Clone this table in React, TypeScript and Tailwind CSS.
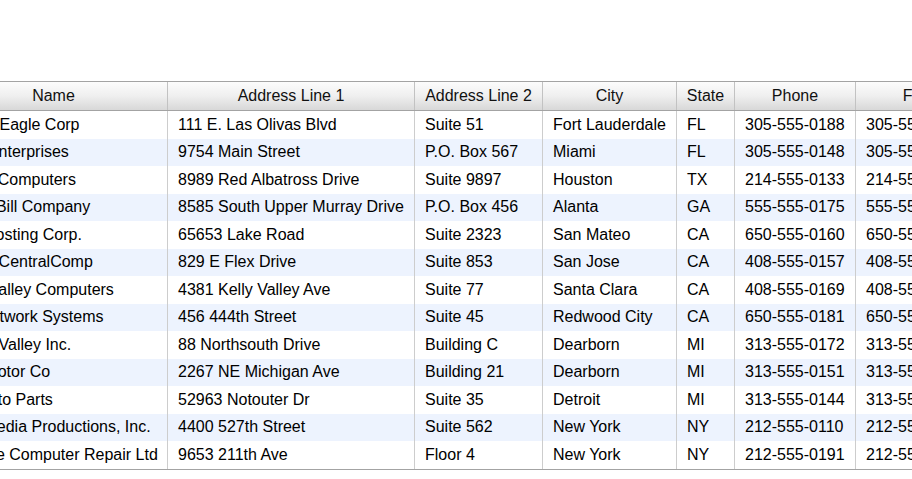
const columns = [
  { id: "name", label: "Name", width: "w-[228px]", pad: "pl-[7px]" },
  { id: "addr1", label: "Address Line 1", width: "w-[247px]", pad: "pl-[10px]" },
  { id: "addr2", label: "Address Line 2", width: "w-[128px]", pad: "pl-[10px]" },
  { id: "city", label: "City", width: "w-[134px]", pad: "pl-[10px]" },
  { id: "state", label: "State", width: "w-[58px]", pad: "pl-[10px]" },
  { id: "phone", label: "Phone", width: "w-[121px]", pad: "pl-[10px]" },
  { id: "fax", label: "Fax", width: "w-[121px]", pad: "pl-[10px]" },
] as const;

const rows = [
  ["Liberty Eagle Corp", "111 E. Las Olivas Blvd", "Suite 51", "Fort Lauderdale", "FL", "305-555-0188", "305-555-0189"],
  ["Apex Enterprises", "9754 Main Street", "P.O. Box 567", "Miami", "FL", "305-555-0148", "305-555-0149"],
  ["Global Computers", "8989 Red Albatross Drive", "Suite 9897", "Houston", "TX", "214-555-0133", "214-555-0134"],
  ["Pecos Bill Company", "8585 South Upper Murray Drive", "P.O. Box 456", "Alanta", "GA", "555-555-0175", "555-555-0176"],
  ["Web Hosting Corp.", "65653 Lake Road", "Suite 2323", "San Mateo", "CA", "650-555-0160", "650-555-0161"],
  ["Pacific CentralComp", "829 E Flex Drive", "Suite 853", "San Jose", "CA", "408-555-0157", "408-555-0158"],
  ["River Valley Computers", "4381 Kelly Valley Ave", "Suite 77", "Santa Clara", "CA", "408-555-0169", "408-555-0170"],
  ["Bay Network Systems", "456 444th Street", "Suite 45", "Redwood City", "CA", "650-555-0181", "650-555-0182"],
  ["Silicon Valley Inc.", "88 Northsouth Drive", "Building C", "Dearborn", "MI", "313-555-0172", "313-555-0173"],
  ["Ford Motor Co", "2267 NE Michigan Ave", "Building 21", "Dearborn", "MI", "313-555-0151", "313-555-0152"],
  ["Ace Auto Parts", "52963 Notouter Dr", "Suite 35", "Detroit", "MI", "313-555-0144", "313-555-0145"],
  ["Best Media Productions, Inc.", "4400 527th Street", "Suite 562", "New York", "NY", "212-555-0110", "212-555-0111"],
  ["Reliable Computer Repair Ltd", "9653 211th Ave", "Floor 4", "New York", "NY", "212-555-0191", "212-555-0192"],
];

export default function App() {
  return (
    <div className="h-[479px] w-[912px] overflow-hidden bg-white pt-[81px] font-['Liberation_Sans',Arial,sans-serif] text-[16px] text-black">
      <div className="ml-[-60px] w-max">
        {/* Header */}
        <div className="flex h-[30px] border-y border-[#a3a3a3] bg-gradient-to-b from-[#fcfcfc] via-[#efefef] to-[#d8d8d8]">
          {columns.map((col) => (
            <div
              key={col.id}
              className={`${col.width} flex items-center justify-center border-r border-[#c2c2c2] text-[#111]`}
            >
              {col.label}
            </div>
          ))}
        </div>

        {/* Rows */}
        {rows.map((row, i) => (
          <div
            key={i}
            className={`flex h-[27.5px] ${i % 2 === 1 ? "bg-[#edf3fe]" : "bg-white"}`}
          >
            {row.map((cell, j) => (
              <div
                key={j}
                className={`${columns[j].width} ${columns[j].pad} flex items-center overflow-hidden whitespace-nowrap border-r border-[#cdcdcd]`}
              >
                {cell}
              </div>
            ))}
          </div>
        ))}
        <div className="border-t border-[#a3a3a3]" />
      </div>
    </div>
  );
}
